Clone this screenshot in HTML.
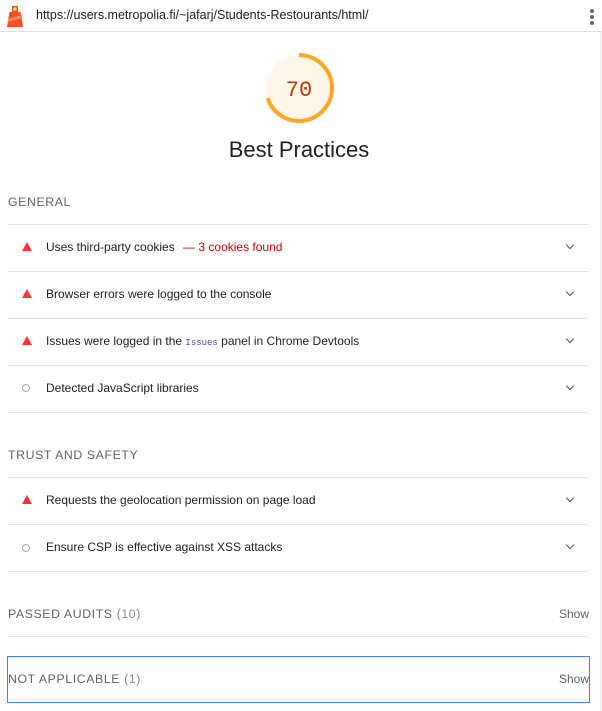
<!DOCTYPE html>
<html><head><style>
body{margin:0;width:602px;height:711px;background:#fff;font-family:"Liberation Sans",Arial,sans-serif;position:relative;overflow:hidden;color:#212121}
.top{position:absolute;left:0;top:0;width:602px;height:31px;border-bottom:1px solid #e0e0e0}
.url{position:absolute;left:36px;top:8px;font-size:12.5px;color:#202124}
.vr{position:absolute;left:600px;top:32px;width:1px;height:679px;background:#e8e8e8}
.h{position:absolute;left:8px;font-size:12.3px;letter-spacing:.6px;color:#5f6368}
.line{position:absolute;left:8px;width:581px;height:1px;background:#e4e4e4}
.row{position:absolute;left:46px;font-size:12px;color:#212121}
.tri{position:absolute;left:22px;width:0;height:0;border-left:5.5px solid transparent;border-right:5.5px solid transparent;border-bottom:9px solid #f33}
.circ{position:absolute;left:22px;width:6px;height:6px;border:1.6px solid #aaa;border-radius:50%}
.chev{position:absolute;left:567px;width:5px;height:5px;border-right:1.5px solid #555;border-bottom:1.5px solid #555;transform:rotate(45deg)}
.show{position:absolute;left:559px;font-size:12px;color:#5f6368}
</style></head><body>
<div class="top">
<svg style="position:absolute;left:6px;top:4px" width="18" height="24" viewBox="0 0 18 24"><rect x="6" y="2" width="6" height="6" fill="#f4511e"/><rect x="7.5" y="3.5" width="3" height="3" fill="#fde293"/><polygon points="3.5,8 14.5,8 17,23 1,23" fill="#f4511e"/><polygon points="2,15 16,11 16.5,14 2,18" fill="#ff8a65"/></svg>
<div class="url">https://users.metropolia.fi/~jafarj/Students-Restourants/html/</div>
<div style="position:absolute;left:590px;top:9px;width:4px;height:4px;border-radius:50%;background:#666;box-shadow:0 6px #666,0 12px #666"></div>
</div>
<div class="vr"></div>
<svg style="position:absolute;left:262px;top:51px" width="74" height="74" viewBox="0 0 74 74"><circle cx="37" cy="37" r="33" fill="#fff7ea"/><circle cx="37" cy="37" r="33" fill="none" stroke="#ffa726" stroke-width="4" stroke-dasharray="145.1 207.3" transform="rotate(-90 37 37)"/><text x="37" y="45" text-anchor="middle" font-family="Liberation Mono,monospace" font-size="22" fill="#c33300">70</text></svg>
<div style="position:absolute;left:0;width:598px;top:137px;text-align:center;font-size:22px;color:#212121">Best Practices</div>

<div class="h" style="top:195px">GENERAL</div>
<div class="line" style="top:224px"></div>
<div class="tri" style="top:242px"></div><div class="row" style="top:240px">Uses third-party cookies <span style="color:#c00;margin-left:5px">— 3 cookies found</span></div><div class="chev" style="top:242px"></div>
<div class="line" style="top:271px"></div>
<div class="tri" style="top:289px"></div><div class="row" style="top:287px">Browser errors were logged to the console</div><div class="chev" style="top:289px"></div>
<div class="line" style="top:318px"></div>
<div class="tri" style="top:336px"></div><div class="row" style="top:334px">Issues were logged in the <span style="font-family:'Liberation Mono',monospace;font-size:9px;color:#3f51b5">Issues</span> panel in Chrome Devtools</div><div class="chev" style="top:336px"></div>
<div class="line" style="top:365px"></div>
<div class="circ" style="top:384px"></div><div class="row" style="top:381px">Detected JavaScript libraries</div><div class="chev" style="top:383px"></div>
<div class="line" style="top:412px"></div>

<div class="h" style="top:448px">TRUST AND SAFETY</div>
<div class="line" style="top:477px"></div>
<div class="tri" style="top:495px"></div><div class="row" style="top:493px">Requests the geolocation permission on page load</div><div class="chev" style="top:495px"></div>
<div class="line" style="top:524px"></div>
<div class="circ" style="top:544px"></div><div class="row" style="top:540px">Ensure CSP is effective against XSS attacks</div><div class="chev" style="top:542px"></div>
<div class="line" style="top:571px"></div>

<div class="h" style="top:607px">PASSED AUDITS <span style="color:#888">(10)</span></div><div class="show" style="top:607px">Show</div>
<div class="line" style="top:636px"></div>
<div style="position:absolute;left:7px;top:656px;width:581px;height:45px;border:1px solid #4285f4"></div>
<div class="h" style="top:672px">NOT APPLICABLE <span style="color:#888">(1)</span></div><div class="show" style="top:672px">Show</div>
</body></html>
